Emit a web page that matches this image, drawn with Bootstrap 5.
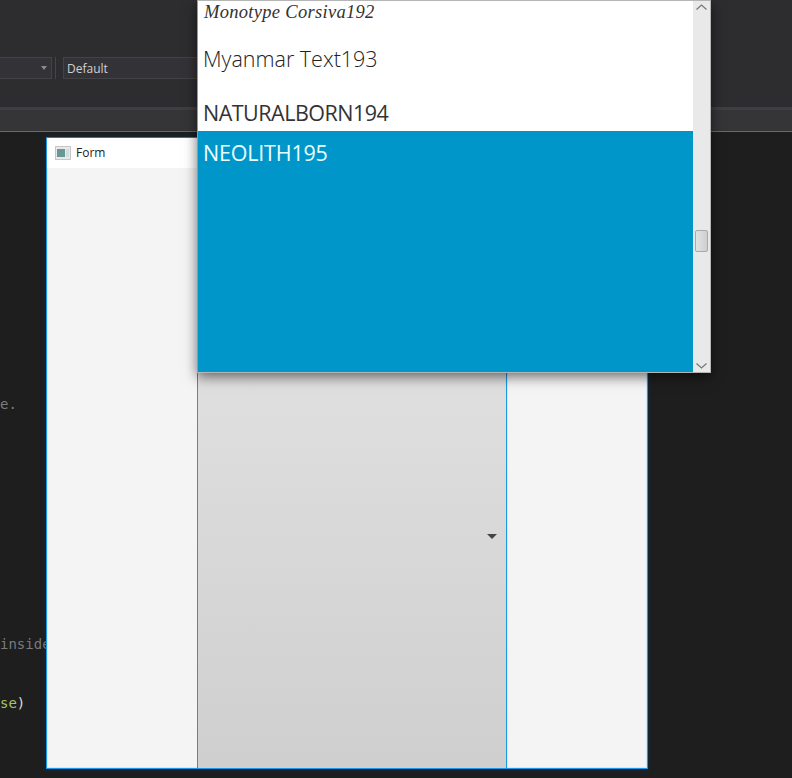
<!DOCTYPE html>
<html lang="en">
<head>
<meta charset="utf-8">
<title>Form</title>
<link href="https://cdn.jsdelivr.net/npm/bootstrap@5.3.0/dist/css/bootstrap.min.css" rel="stylesheet">
<style>
html,body{margin:0;height:778px;overflow:hidden}
body{background:#1e1e1e;font-family:"Open Sans","Noto Sans",sans-serif;position:relative;width:792px}
.ide-toolbar{height:107px;background:#2d2d30;padding-top:57px}
.ide-combo{height:22px;border:1px solid #434346;background:#333337;color:#d0d0d0;font:12px/21px "Open Sans",sans-serif;padding-left:3px}
.ide-combo-a{width:52px;border-left:0;position:relative}
.ide-combo-a::after{content:"";position:absolute;right:4px;top:8px;border:3px solid transparent;border-top:4px solid #8a8a8a;border-bottom:0}
.ide-sep{width:1px;height:22px;background:#46464a;margin:0 7px 0 3px}
.ide-combo-b{width:150px}
.ide-strip{height:3px;background:#3f3f43}
.ide-tabs{height:22px;background:#353538;border-bottom:1px solid #6a6a6c}
.ide-code{font:14px/20px "DejaVu Sans Mono",monospace;color:#7a7a7a;position:absolute;left:0;white-space:pre;margin:0}
.code-a{top:394px}
.code-b{top:634px}
.code-c{top:693px;color:#dcdcdc}
.code-green{color:#a6c26a}
.app-win{position:absolute;left:46px;top:137px;width:602px;height:632px;border:1px solid #1c97ea;border-top-color:#0f7fc8;background:#f4f4f4;box-shadow:0 0 6px rgba(0,70,130,.35),inset 0 0 0 1px #cfeafa;display:flex;flex-direction:column}
.win-title{height:30px;background:#fff;font:12px/30px "Open Sans",sans-serif;color:#222;padding-left:8px;gap:5px}
.win-body{padding-left:150px}
.combo-face{width:310px;border-left:1px solid #1c97ea;border-right:1px solid #1c97ea;background:linear-gradient(#dfdfdf 35%,#cfcfcf);box-shadow:1px 0 0 #cfeafa;padding-right:9px}
.combo-arrow{width:0;height:0;border-left:5px solid transparent;border-right:5px solid transparent;border-top:5px solid #444;margin-top:366px}
.drop-pop{position:absolute;left:197px;top:0;width:514px;height:373px;background:#fff;border:1px solid #b5b5b5;border-left-color:#999;box-shadow:0 4px 12px rgba(0,0,0,.55);display:flex}
.drop-list{flex:1;min-width:0;overflow:hidden;display:flex;flex-direction:column}
.drop-item{padding-left:5px;color:#333;white-space:nowrap}
.it-a{height:32px;font:italic 18.5px/22px "Liberation Serif",serif;letter-spacing:.3px;padding-left:6px}
.it-b{height:47px;font-size:21.5px;line-height:52px;font-weight:300;color:#222}
.it-c{height:51px;font-size:21.5px;line-height:66px;letter-spacing:-.5px}
.it-d{flex:1;background:#0096c9;color:#eaffff;font-size:21.5px;line-height:44px;letter-spacing:-.2px}
.drop-scroll{width:17px;background:#e9e9e9;position:relative;flex:none}
.scroll-thumb{position:absolute;left:2px;top:229px;width:13px;height:22px;border:1px solid #a9a9a9;border-radius:2px;background:linear-gradient(90deg,#e2e2e2,#cfcfcf)}
.scroll-btn{position:absolute;left:3px;width:11px;height:6px}
.scroll-up{top:3px}
.scroll-down{bottom:3px}
</style>
</head>
<body>
<div class="ide-toolbar d-flex align-items-start">
  <div class="ide-combo ide-combo-a"></div>
  <div class="ide-sep"></div>
  <div class="ide-combo ide-combo-b">Default</div>
</div>
<div class="ide-strip"></div>
<div class="ide-tabs"></div>
<pre class="ide-code code-a">e.</pre>
<pre class="ide-code code-b">inside</pre>
<pre class="ide-code code-c"><span class="code-green">se</span>)</pre>

<div class="app-win">
  <div class="win-title d-flex align-items-center">
    <svg width="16" height="14" viewBox="0 0 16 14" aria-hidden="true"><rect x=".5" y=".5" width="15" height="13" fill="#e6eaec" stroke="#c6c6c6"/><rect x="2" y="3" width="8" height="8" fill="#6c9692"/><rect x="11" y="3" width="3" height="8" fill="#cfdce0"/></svg>
    <span>Form</span>
  </div>
  <div class="win-body d-flex flex-grow-1">
    <div class="combo-face d-flex justify-content-end align-items-start">
      <div class="combo-arrow"></div>
    </div>
  </div>
</div>

<div class="drop-pop">
  <div class="drop-list">
    <div class="drop-item it-a">Monotype Corsiva192</div>
    <div class="drop-item it-b">Myanmar Text193</div>
    <div class="drop-item it-c">NATURALBORN194</div>
    <div class="drop-item it-d">NEOLITH195</div>
  </div>
  <div class="drop-scroll">
    <svg class="scroll-btn scroll-up" viewBox="0 0 11 6" aria-hidden="true"><path d="M.5 5.5 5.5 1l5 4.5" fill="none" stroke="#777" stroke-width="1.2"/></svg>
    <div class="scroll-thumb"></div>
    <svg class="scroll-btn scroll-down" viewBox="0 0 11 6" aria-hidden="true"><path d="M.5.5l5 4.5 5-4.5" fill="none" stroke="#777" stroke-width="1.2"/></svg>
  </div>
</div>
<script src="https://cdn.jsdelivr.net/npm/bootstrap@5.3.0/dist/js/bootstrap.bundle.min.js"></script>
</body>
</html>
